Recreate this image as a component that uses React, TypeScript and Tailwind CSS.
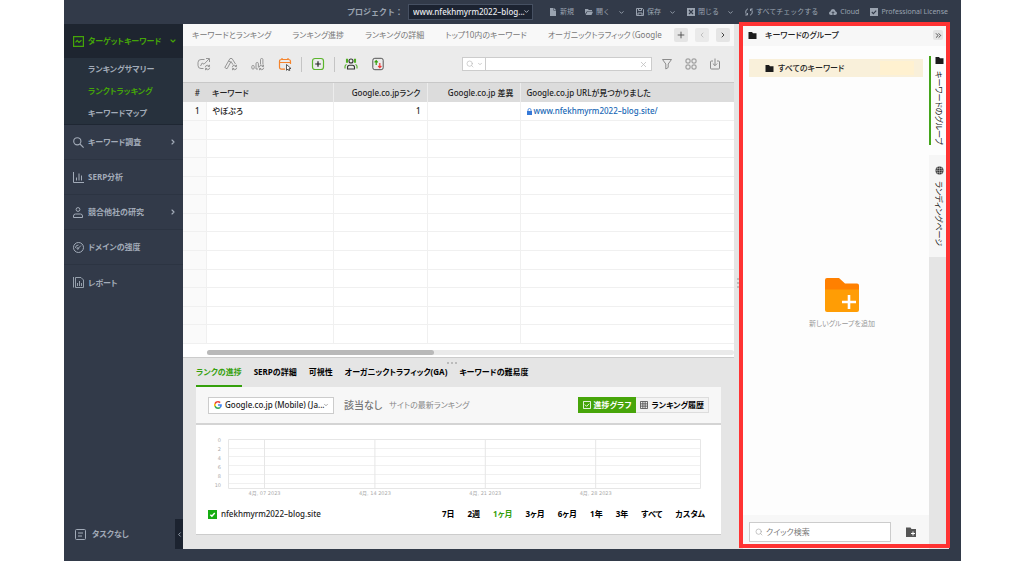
import * as React from "react";
import { ChevronDown, ChevronLeft, ChevronRight, ChevronsRight, Plus, Search, X } from "lucide-react";

type IconProps = { className?: string };

const NAV = [
  { label: "キーワード調査", icon: SearchIcon, expandable: true },
  { label: "SERP分析", icon: BarsIcon, expandable: false },
  { label: "競合他社の研究", icon: PersonIcon, expandable: true },
  { label: "ドメインの強度", icon: GaugeIcon, expandable: false },
  { label: "レポート", icon: ReportIcon, expandable: false },
];

const MENU = [
  { label: "新規", icon: FileIcon, menu: false },
  { label: "開く", icon: OpenIcon, menu: true },
  { label: "保存", icon: SaveIcon, menu: true },
  { label: "閉じる", icon: CloseBoxIcon, menu: true },
  { label: "すべてチェックする", icon: RefreshIcon, menu: false },
  { label: "Cloud", icon: CloudIcon, menu: false },
  { label: "Professional License", icon: LicenseIcon, menu: false },
];

const WORKSPACES = ["キーワードとランキング", "ランキング進捗", "ランキングの詳細", "トップ10内のキーワード", "オーガニックトラフィック（Google"];
const DETAIL_TABS = ["ランクの進捗", "SERPの詳細", "可視性", "オーガニックトラフィック(GA)", "キーワードの難易度"];
const RANGES = ["7日", "2週", "1ヶ月", "3ヶ月", "6ヶ月", "1年", "3年", "すべて", "カスタム"];
const EMPTY_ROWS = Array.from({ length: 12 }, (_, i) => i);

export default function App() {
  return (
    <div
      lang="ja"
      className="min-h-screen bg-white pl-16 pr-[63px] text-[8px] leading-3 text-[#222] [font-family:'Noto_Sans','Noto_Sans_CJK_JP',sans-serif] [font-feature-settings:'palt']"
    >
      <div className="flex min-h-screen flex-col bg-[#323a49]">
        <TopBar />
        <div className="flex flex-1 pr-3">
          <Sidebar />
          <main className="flex min-w-0 flex-1 flex-col bg-[#e5e5e5]">
            <WorkspaceTabs />
            <Toolbar />
            <KeywordTable />
            <DetailPanel />
          </main>
          <div className="flex w-[9px] flex-col justify-center gap-[2px] bg-[#e5e5e5] pb-2 pl-[3px]">
            <i className="h-[2px] w-[3px] bg-[#bbb]" />
            <i className="h-[2px] w-[3px] bg-[#bbb]" />
            <i className="h-[2px] w-[3px] bg-[#bbb]" />
          </div>
          <GroupPanel />
        </div>
        <div className="h-3" />
      </div>
    </div>
  );
}

function TopBar() {
  return (
    <header className="flex h-6 items-center justify-end pr-[13px] text-[7px] text-[#9aa3b0] [font-feature-settings:normal]">
      <label htmlFor="project" className="mr-[5px] text-[8px] font-bold">プロジェクト：</label>
      <div className="relative mr-4 w-[125px]">
        <select
          id="project"
          className="block h-4 w-full appearance-none border border-[#465062] bg-[#1c2331] pl-1 text-[8px] font-medium text-[#e8eaee]"
        >
          <option>www.nfekhmyrm2022–blog...</option>
        </select>
        <ChevronDown size={7} strokeWidth={3} className="pointer-events-none absolute right-[3px] top-1 text-[#b9c0ca]" />
      </div>
      <nav className="flex items-center gap-[11px]">
        {MENU.map(({ label, icon: Icon, menu }) => (
          <button key={label} type="button" className="flex items-center gap-[3px] whitespace-nowrap">
            <Icon className="size-2 shrink-0" />
            {label}
            {menu && <ChevronDown size={7} strokeWidth={3} className="ml-[5px]" />}
          </button>
        ))}
      </nav>
    </header>
  );
}

function Sidebar() {
  return (
    <aside className="flex w-[119px] shrink-0 flex-col font-bold text-[#a2abb8]">
      <button type="button" className="flex h-[34px] items-center gap-1 bg-[#1e2530] pl-[9px] pr-[6px] text-[#44a508]">
        <TargetIcon className="size-[11px]" />
        <span>ターゲットキーワード</span>
        <ChevronDown size={8} strokeWidth={3.5} className="ml-auto" />
      </button>
      <ul className="border-b border-[#1f2733] bg-[#27313d]">
        {["ランキングサマリー", "ランクトラッキング", "キーワードマップ"].map((label) => (
          <li key={label} className={label === "ランクトラッキング" ? "text-[#44a508]" : ""}>
            <a href="#" className="flex h-[22px] items-center pl-6">{label}</a>
          </li>
        ))}
      </ul>
      {NAV.map(({ label, icon: Icon, expandable }) => (
        <button key={label} type="button" className="flex h-[35px] items-center gap-1 border-b border-[#2c3442] pl-[9px] pr-[6px] last-of-type:border-0">
          <Icon className="size-[11px]" />
          <span>{label}</span>
          {expandable && <ChevronRight size={8} strokeWidth={3.5} className="ml-auto" />}
        </button>
      ))}
      <div className="mt-auto flex h-[30px] items-center gap-[6px] pl-[11px]">
        <TaskIcon className="size-[11px]" />
        <span>タスクなし</span>
        <button type="button" aria-label="サイドバーを閉じる" className="ml-auto flex h-full w-2 items-center justify-center bg-[#1c2330]">
          <ChevronLeft size={7} strokeWidth={3} />
        </button>
      </div>
    </aside>
  );
}

function WorkspaceTabs() {
  return (
    <div className="flex h-[22px] items-center bg-[#f8f8f8] pl-[9px] pr-1 text-[#777]">
      <div className="flex min-w-0 flex-1 gap-[21px] overflow-hidden">
        {WORKSPACES.map((label) => (
          <a key={label} href="#" className="whitespace-nowrap">{label}</a>
        ))}
      </div>
      <div className="ml-1 flex gap-[7px]">
        <button type="button" aria-label="追加" className="flex size-[14px] items-center justify-center rounded-xs bg-[#e5e5e5] text-[#444]"><Plus size={10} /></button>
        <button type="button" aria-label="前へ" className="flex size-[14px] items-center justify-center rounded-xs bg-[#eaeaea] text-[#aaa]"><ChevronLeft size={8} /></button>
        <button type="button" aria-label="次へ" className="flex size-[14px] items-center justify-center rounded-xs bg-[#e5e5e5] text-[#444]"><ChevronRight size={8} strokeWidth={3} /></button>
      </div>
    </div>
  );
}

function Toolbar() {
  return (
    <div className="flex h-[37px] items-center border-b border-[#c8c8c8] bg-[#ebebeb] pl-[14px] pr-3 text-[#8c8c8c]">
      <div className="flex gap-[13px]">
        <ToolButton label="ランキングを確認"><RankCheckIcon /></ToolButton>
        <ToolButton label="難易度を更新"><DifficultyIcon /></ToolButton>
        <ToolButton label="検索数を更新"><VolumeIcon /></ToolButton>
        <ToolButton label="スケジュール"><ScheduleIcon /></ToolButton>
      </div>
      <span className="mx-[9px] h-[15px] w-px bg-[#c4c4c4]" />
      <ToolButton label="キーワードを追加"><AddIcon /></ToolButton>
      <span className="mx-[9px] h-[15px] w-px bg-[#c4c4c4]" />
      <div className="flex gap-[13px]">
        <ToolButton label="競合"><CompetitorsIcon /></ToolButton>
        <ToolButton label="順位の変動"><ChangesIcon /></ToolButton>
      </div>
      <div className="ml-auto flex h-[14px] w-[190px] items-center border border-[#ccc] bg-white text-[#bbb]">
        <span className="flex h-full w-[23px] items-center justify-center gap-[3px] border-r border-[#ccc]">
          <Search size={8} />
          <ChevronDown size={6} strokeWidth={3} />
        </span>
        <input aria-label="検索" className="min-w-0 flex-1 outline-none" />
        <X size={9} className="mr-[3px]" />
      </div>
      <div className="ml-2 flex gap-[10px]">
        <ToolButton label="フィルター">
          <svg viewBox="0 0 14 14" className="size-full" fill="none" stroke="currentColor"><path d="M2.5 2.5h9L8.2 7v3.5L5.8 12V7z" /></svg>
        </ToolButton>
        <ToolButton label="表示">
          <svg viewBox="0 0 14 14" className="size-full" fill="none" stroke="currentColor">
            <rect x="2" y="2" width="4" height="4" rx="1" /><rect x="8" y="2" width="4" height="4" rx="1" />
            <rect x="2" y="8" width="4" height="4" rx="1" /><rect x="8" y="8" width="4" height="4" rx="1" />
          </svg>
        </ToolButton>
        <ToolButton label="エクスポート">
          <svg viewBox="0 0 14 14" className="size-full" fill="none" stroke="currentColor">
            <path d="M5 4H3.5Q2.5 4 2.5 5v6q0 1 1 1h7q1 0 1-1V5q0-1-1-1H9M7 1.5v7M4.8 6.5 7 8.7l2.2-2.2" />
          </svg>
        </ToolButton>
      </div>
    </div>
  );
}

function ToolButton({ label, children }: { label: string; children: React.ReactNode }) {
  return <button type="button" aria-label={label} className="size-[14px] shrink-0">{children}</button>;
}

function KeywordTable() {
  return (
    <div className="flex flex-1 flex-col border-b border-[#ccc] bg-white">
      <table className="h-[262px] w-full flex-1 table-fixed border-collapse">
        <colgroup>
          <col className="w-[23px]" />
          <col className="w-[127px]" />
          <col className="w-[94px]" />
          <col className="w-[93px]" />
          <col />
        </colgroup>
        <thead>
          <tr className="h-[19px] bg-[#dcdcdc] [&>th]:border-r [&>th]:border-[#ececec] [&>th]:px-[6px] [&>th]:font-medium">
            <th className="border-r-0! text-right">#</th>
            <th className="text-left">キーワード</th>
            <th className="whitespace-nowrap text-right">Google.co.jpランク</th>
            <th className="whitespace-nowrap text-right">Google.co.jp 差異</th>
            <th className="whitespace-nowrap border-r-0! text-left">Google.co.jp URLが見つかりました</th>
          </tr>
        </thead>
        <tbody className="[&_td]:border-b [&_td]:border-r [&_td]:border-[#f0f0f0] [&_td]:px-[6px] [&_td:first-child]:bg-[#fafafa] [&_td:last-child]:border-r-0">
          <tr className="h-[18px] font-medium">
            <td className="text-right">1</td>
            <td>やぼぷろ</td>
            <td className="text-right">1</td>
            <td />
            <td>
              <a href="#" className="flex items-center gap-[2px] text-[#1767b5]">
                <LockIcon className="h-[7px] w-[5px]" />
                www.nfekhmyrm2022–blog.site/
              </a>
            </td>
          </tr>
          {EMPTY_ROWS.map((i) => (
            <tr key={i} className="h-[18px]"><td /><td /><td /><td /><td /></tr>
          ))}
        </tbody>
      </table>
      <div className="mb-[2px] ml-6 mt-[6px] h-[5px] rounded-full bg-[#eaeaea]">
        <div className="h-full w-[43%] rounded-full bg-[#b9b9b9]" />
      </div>
    </div>
  );
}

function DetailPanel() {
  return (
    <section className="relative px-[13px] pb-[14px]">
      <div className="absolute left-[48%] top-1 flex gap-[2px]">
        <i className="size-[2px] bg-[#bbb]" /><i className="size-[2px] bg-[#bbb]" /><i className="size-[2px] bg-[#bbb]" />
      </div>
      <div className="flex h-[29px] gap-3 font-bold text-black">
        {DETAIL_TABS.map((label, i) => (
          <button
            key={label}
            type="button"
            className={i === 0 ? "whitespace-nowrap border-b-2 border-[#35a00c] text-[#35a00c]" : "whitespace-nowrap border-b-2 border-transparent"}
          >
            {label}
          </button>
        ))}
      </div>
      <div className="border-b border-[#ccc] bg-white">
        <div className="flex h-[38px] items-center border-b-2 border-[#d4d4d4] bg-[#f7f7f7] px-3">
          <div className="relative w-[126px]">
            <GoogleIcon className="pointer-events-none absolute left-[6px] top-1 size-2" />
            <select aria-label="検索エンジン" className="block h-[17px] w-full appearance-none border border-[#ccc] bg-white pl-4 font-medium">
              <option>Google.co.jp (Mobile) (Ja...</option>
            </select>
            <ChevronDown size={6} className="pointer-events-none absolute right-[5px] top-[5px] text-[#555]" />
          </div>
          <span className="ml-[10px] text-[10px] font-medium text-[#777]">該当なし</span>
          <span className="ml-[7px] text-[#888]">サイトの最新ランキング</span>
          <div className="ml-auto flex h-4 font-bold">
            <button type="button" className="flex items-center gap-[3px] bg-[#47a50a] px-[5px] text-white">
              <svg viewBox="0 0 9 9" className="size-2" fill="none" stroke="currentColor"><path d="M.5.5h8v8h-8zM2 4l2 2 3-3" /></svg>
              進捗グラフ
            </button>
            <button type="button" className="flex items-center gap-[3px] border border-l-0 border-[#ddd] bg-[#f3f3f3] px-1 text-black">
              <svg viewBox="0 0 9 9" className="size-2" fill="none" stroke="#555"><path d="M.5.5h8v8h-8zM3.2.5v8M5.8.5v8M.5 3.2h8M.5 5.8h8" /></svg>
              ランキング履歴
            </button>
          </div>
        </div>
        <RankChart />
        <div className="flex h-[37px] items-center justify-between px-3 pb-[3px] pr-4">
          <label className="flex items-center gap-1 font-medium">
            <span className="relative size-[9px]">
              <input type="checkbox" defaultChecked className="block size-full appearance-none bg-[#16ad12]" />
              <svg viewBox="0 0 10 10" className="pointer-events-none absolute inset-0" fill="none" stroke="#fff" strokeWidth="1.6"><path d="m2.6 5.2 1.7 1.6 3.2-3.5" /></svg>
            </span>
            nfekhmyrm2022–blog.site
          </label>
          <div className="flex gap-[13px] font-bold text-black">
            {RANGES.map((label) => (
              <button key={label} type="button" className={label === "1ヶ月" ? "text-[#35a00c]" : ""}>{label}</button>
            ))}
          </div>
        </div>
      </div>
    </section>
  );
}

function RankChart() {
  const lines = [24, 32, 41, 50, 59];
  const dates = ["07", "14", "21", "28"];
  return (
    <svg viewBox="0 0 525 72" className="block w-full" fill="none">
      <g stroke="#f0f0f0">
        {lines.map((y) => <path key={y} d={`M32 ${y - 0.5}h473`} />)}
      </g>
      <g stroke="#e6e6e6">
        <path d="M32.5 14.5h472v49h-472z" />
        {dates.map((d, i) => <path key={d} d={`M${68.5 + i * 110.4} 14v49`} />)}
      </g>
      <g fill="#aaa" fontSize="5" className="[font-family:'DejaVu_Sans','Noto_Sans_CJK_JP',sans-serif]">
        {["0", "2", "4", "6", "8", "10"].map((n, i) => (
          <text key={n} x="25" y={16.5 + i * 9} textAnchor="end">{n}</text>
        ))}
        {dates.map((d, i) => (
          <text key={d} x={68.5 + i * 110.4} y="70" textAnchor="middle">{`4月, ${d} 2023`}</text>
        ))}
      </g>
    </svg>
  );
}

function GroupPanel() {
  return (
    <aside className="relative flex w-[206px] shrink-0 flex-col bg-[#fdfdfd]">
      <div className="flex h-[22px] items-center gap-2 bg-[#f7f7f7] pl-[5px] pr-[6px] font-medium">
        <FolderIcon className="size-[9px]" />
        <h2>キーワードのグループ</h2>
        <button type="button" aria-label="パネルを閉じる" className="ml-auto flex size-[10px] items-center justify-center rounded-xs bg-[#e5e5e5]">
          <ChevronsRight size={9} />
        </button>
      </div>
      <div className="flex flex-1">
        <div className="flex flex-1 flex-col">
          <button type="button" className="mx-[6px] mt-[13px] flex h-[18px] items-center gap-1 bg-[#f9f0da] pl-4 font-medium">
            <FolderIcon className="size-[9px]" />
            すべてのキーワード
            <span className="ml-auto mr-[9px] h-[14px] w-[34px] bg-[#fff1d0]" />
          </button>
          <div className="flex flex-1 flex-col items-center justify-center pl-3 pt-4">
            <button type="button" className="flex flex-col items-center gap-[6px] text-[7px] text-[#999]">
              <svg viewBox="0 0 34 34" className="size-[34px]">
                <path d="M2 0h12l6 5.5h12q2 0 2 2V14H0V2q0-2 2-2" fill="#ff8000" />
                <path d="M0 11.5h34V32q0 2-2 2H2q-2 0-2-2z" fill="#ff9d05" />
                <path d="M24 17v14M17 24h14" stroke="#fff" strokeWidth="2.6" />
              </svg>
              新しいグループを追加
            </button>
          </div>
          <div className="flex h-[34px] items-center bg-[#f7f7f7] pl-[6px] pr-[13px]">
            <label className="flex h-5 w-[142px] items-center gap-[3px] border border-[#ccc] bg-white px-[5px]">
              <Search size={8} className="text-[#aaa]" />
              <input aria-label="クイック検索" placeholder="クイック検索" className="min-w-0 flex-1 outline-none placeholder:text-[#777]" />
            </label>
            <button type="button" aria-label="グループを追加" className="ml-auto">
              <svg viewBox="0 0 10 10" className="size-[10px]"><path d="M0 .5h4.5L5.5 2H10v8H0z" fill="#555" /><path d="M7 4.5v4M5 6.5h4" stroke="#fff" /></svg>
            </button>
          </div>
        </div>
        <div className="flex w-5 flex-col bg-[#e5e5e5]">
          <div className="bg-[#fdfdfd] py-[10px]">
            <SideTab active icon={<FolderIcon className="size-[9px]" />} label="キーワードのグループ" />
          </div>
          <div className="bg-[#f6f6f6] py-[11px]">
            <SideTab icon={<GlobeIcon className="size-[9px]" />} label="ランディングページ" />
          </div>
        </div>
      </div>
      {/* highlight frame over the whole panel */}
      <div className="pointer-events-none absolute -left-1 -right-px -top-[2px] bottom-px border-4 border-[#ff3333]" />
    </aside>
  );
}

function SideTab({ icon, label, active }: { icon: React.ReactNode; label: string; active?: boolean }) {
  return (
    <button
      type="button"
      className={
        active
          ? "flex w-full flex-col items-center gap-[6px] border-l-2 border-[#44a51c] pr-[2px]"
          : "flex w-full flex-col items-center gap-[6px] border-l-2 border-transparent pr-[2px]"
      }
    >
      {icon}
      <span className="whitespace-nowrap [text-orientation:sideways] [writing-mode:vertical-rl]">{label}</span>
    </button>
  );
}

/* ---- icons ---- */

function FolderIcon({ className }: IconProps) {
  return <svg viewBox="0 0 9 9" className={className} fill="#1c1c1c"><path d="M.5 1H4l1 1.3h3.5V8h-8z" /></svg>;
}
function GlobeIcon({ className }: IconProps) {
  return (
    <svg viewBox="0 0 9 9" className={className} fill="none">
      <circle cx="4.5" cy="4.5" r="4" fill="#333" />
      <path d="M4.5.5v8M.5 4.5h8M1.5 2.5h6M1.5 6.5h6M2.7 1q-1.5 3.5 0 7M6.3 1q1.5 3.5 0 7" stroke="#ddd" strokeWidth=".4" />
    </svg>
  );
}
function LockIcon({ className }: IconProps) {
  return <svg viewBox="0 0 5 7" className={className}><path d="M0 3h5v4H0z" fill="#3579d8" /><path d="M1 3V2q0-1.5 1.5-1.5T4 2v1" fill="none" stroke="#3579d8" strokeWidth=".8" /></svg>;
}
function GoogleIcon({ className }: IconProps) {
  return (
    <svg viewBox="0 0 48 48" className={className}>
      <path fill="#ea4335" d="M24 9.5c3.5 0 6.7 1.2 9.2 3.6l6.9-6.9C35.9 2.4 30.5 0 24 0 14.6 0 6.5 5.4 2.6 13.2l8 6.2C12.4 13.7 17.7 9.5 24 9.5z" />
      <path fill="#4285f4" d="M47 24.5c0-1.6-.2-3.1-.4-4.5H24v9h12.9c-.6 3-2.2 5.5-4.7 7.2l7.7 6C44.4 38 47 31.8 47 24.5z" />
      <path fill="#fbbc05" d="M10.5 28.6a14 14 0 0 1 0-9.2l-8-6.2a24 24 0 0 0 0 21.6z" />
      <path fill="#34a853" d="M24 48c6.5 0 11.9-2.1 15.9-5.8l-7.7-6A14.3 14.3 0 0 1 10.5 28.6l-8 6.2A24 24 0 0 0 24 48z" />
    </svg>
  );
}
function TargetIcon({ className }: IconProps) {
  return <svg viewBox="0 0 11 11" className={className} fill="none" stroke="currentColor" strokeWidth="1.2"><path d="M.6.6h9.8v9.8H.6zM2.5 6.3 4.2 4.5 6 6.5l2.5-2.3" /></svg>;
}
function SearchIcon({ className }: IconProps) {
  return <svg viewBox="0 0 11 11" className={className} fill="none" stroke="currentColor" strokeWidth="1.1"><circle cx="4.3" cy="4.3" r="3.6" /><path d="m7 7 3.6 3.6" /></svg>;
}
function BarsIcon({ className }: IconProps) {
  return <svg viewBox="0 0 11 11" className={className} fill="none" stroke="currentColor"><path d="M.5 0v10.5H11M3.5 8.500V5.500M6 8.500V1.500M8.500 8.500V3.500" /></svg>;
}
function PersonIcon({ className }: IconProps) {
  return <svg viewBox="0 0 11 11" className={className} fill="none" stroke="currentColor"><circle cx="5" cy="2.5" r="1.900" /><path d="M.5 10.500V9q0-2 2-2h5q2 0 2 2v1.500z" /></svg>;
}
function GaugeIcon({ className }: IconProps) {
  return <svg viewBox="0 0 11 11" className={className} fill="none" stroke="currentColor"><circle cx="5.5" cy="5.5" r="5" /><path d="m5 6.500 3-3M2.500 6q0-3 3-3" /><circle cx="4.800" cy="6.500" r=".8" /></svg>;
}
function ReportIcon({ className }: IconProps) {
  return <svg viewBox="0 0 11 11" className={className} fill="none" stroke="currentColor"><path d="M.5 0v10.500M2.500.5H8L10.500 3v7.500h-8zM4.500 9V6M6.500 9V4M8.500 9V6" strokeWidth=".9" /></svg>;
}
function TaskIcon({ className }: IconProps) {
  return <svg viewBox="0 0 11 11" className={className} fill="none" stroke="currentColor"><rect x=".5" y=".5" width="10" height="10" rx="1" /><path d="M3 4h5M3 7h4" /></svg>;
}
function FileIcon({ className }: IconProps) {
  return <svg viewBox="0 0 8 8" className={className} fill="currentColor"><path d="M1 0h3.500v2.500H7V8H1zM5 0l2 2H5z" /></svg>;
}
function OpenIcon({ className }: IconProps) {
  return <svg viewBox="0 0 8 8" className={className} fill="currentColor"><path d="M0 1h3l.8 1H7v1.200H2L0 6zM2.300 3.800H8L6.500 7H.6z" /></svg>;
}
function SaveIcon({ className }: IconProps) {
  return <svg viewBox="0 0 8 8" className={className} fill="none" stroke="currentColor"><path d="M.5.5h6l1 1v6h-7zM2.500.5v2h3v-2M2 7.500V5h4v2.500" /></svg>;
}
function CloseBoxIcon({ className }: IconProps) {
  return <svg viewBox="0 0 8 8" className={className}><path d="M0 0h8v8H0z" fill="currentColor" /><path d="m2 2 4 4M6 2 2 6" stroke="#323a49" strokeWidth="1.200" /></svg>;
}
function RefreshIcon({ className }: IconProps) {
  return <svg viewBox="0 0 8 8" className={className} fill="none" stroke="currentColor"><path d="M3 .8Q.7 1.500.7 4q0 1.500 1.300 2.800M.3 7H2.500V5M5 7.200Q7.300 6.500 7.300 4 7.300 2.500 6 1.200M7.700 1H5.500v2" /></svg>;
}
function CloudIcon({ className }: IconProps) {
  return <svg viewBox="0 0 8 8" className={className}><path d="M2 7Q0 7 0 5.200 0 3.800 1.400 3.500 1.700 1 4 1t2.600 2.500Q8 3.800 8 5.200 8 7 6 7z" fill="currentColor" /><path d="M4 7V4M2.700 5 4 3.700 5.300 5" fill="none" stroke="#323a49" strokeWidth=".9" /></svg>;
}
function LicenseIcon({ className }: IconProps) {
  return <svg viewBox="0 0 8 8" className={className}><path d="M0 0h8v8H0z" fill="currentColor" /><path d="m1.800 4 1.600 1.600 2.800-3" fill="none" stroke="#323a49" strokeWidth="1.100" /></svg>;
}

/* small refresh mark shared by the update actions */
function RefreshMark() {
  return <path d="M8.300 10.300q.2-2 2-2 1 0 1.800.8M12.500 7.800v1.700h-1.700M12.700 10.700q-.2 2-2 2-1 0-1.800-.8M8.500 13.200v-1.700h1.700" strokeWidth=".9" />;
}
function RankCheckIcon() {
  return (
    <svg viewBox="0 0 14 14" className="size-full" fill="none" stroke="currentColor" strokeWidth=".9">
      <path d="M7.500 2.500H4Q1 2.500 1 5.500v3q0 3 3 3h2.500M3.500 9l1.700-3 1.800 1.200 5-5.200M9 1.500h3.500V5" />
      <RefreshMark />
    </svg>
  );
}
function DifficultyIcon() {
  return (
    <svg viewBox="0 0 14 14" className="size-full" fill="none" stroke="currentColor" strokeWidth=".9">
      <path d="M6 1.500h2l3.500 5.500M6 1.500.8 10.500 3 11.800 7 4.500l2 3.200M4.500 4l2.200 1.200" />
      <RefreshMark />
    </svg>
  );
}
function VolumeIcon() {
  return (
    <svg viewBox="0 0 14 14" className="size-full" fill="none" stroke="currentColor" strokeWidth=".9">
      <rect x=".8" y="8.500" width="2.400" height="3.500" rx="1" />
      <path d="M5 12V6.500q0-1 1.200-1t1.200 1v4M9.500 7.500v-5q0-1 1.200-1t1.200 1v5M5 12h2" />
      <RefreshMark />
    </svg>
  );
}
function ScheduleIcon() {
  return (
    <svg viewBox="0 0 14 14" className="size-full" fill="none" stroke="#f5842c" strokeWidth="1.200">
      <path d="M7 12.200H3.500q-2 0-2-2V4.500q0-2 2-2h7q2 0 2 2V7M1.500 5.500h11M4 1v2M10 1v2" />
      <path d="m8.500 7.500 4.500 4-2 .2.800 1.600-1 .4-.8-1.600-1.500 1.200z" fill="#fff" stroke="#333" strokeWidth=".8" />
    </svg>
  );
}
function AddIcon() {
  return (
    <svg viewBox="0 0 14 14" className="size-full" fill="none">
      <rect x="1.500" y="1.500" width="11" height="11" rx="2.500" stroke="#5bb52c" strokeWidth="1.200" />
      <path d="M7 4.200v5.600M4.200 7h5.600" stroke="#222" strokeWidth="1.200" />
    </svg>
  );
}
function CompetitorsIcon() {
  return (
    <svg viewBox="0 0 14 14" className="size-full" fill="none" strokeWidth="1.100">
      <path d="M2.500 2.200h1v3h-1zM10.500 2.200h1v3h-1zM1 11.500V9.500q0-1.500 1.500-2M13 11.500V9.500q0-1.500-1.500-2" stroke="#4fae22" />
      <circle cx="7" cy="4" r="2" stroke="#333" />
      <path d="M3.500 12V10.500q0-2.200 2-2.200h3q2 0 2 2.200V12z" stroke="#333" />
    </svg>
  );
}
function ChangesIcon() {
  return (
    <svg viewBox="0 0 14 14" className="size-full" fill="none">
      <rect x="1.800" y="1.300" width="10.400" height="11.400" rx="2" stroke="#444" strokeWidth=".9" />
      <path d="M5.200 8V3.800M3.600 5.300l1.600-1.700 1.600 1.700" stroke="#35a00c" strokeWidth="1.200" />
      <path d="M8.800 6v4.500M7.200 9l1.600 1.700L10.400 9" stroke="#ee3b3b" strokeWidth="1.200" />
    </svg>
  );
}
